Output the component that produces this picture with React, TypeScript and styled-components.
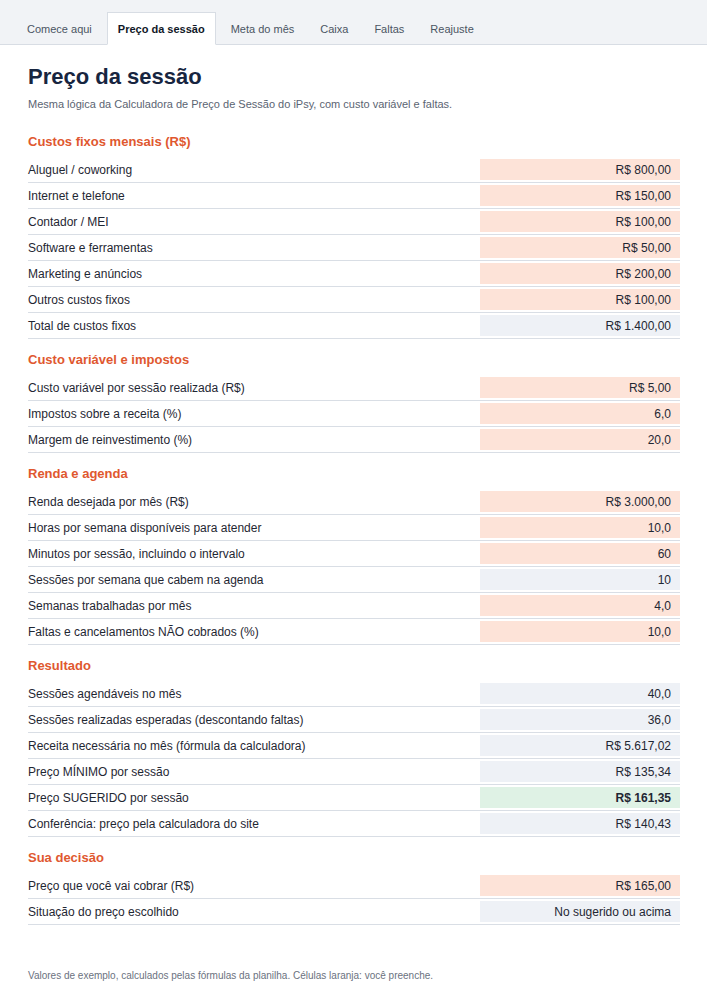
import React from "react";
import styled, { createGlobalStyle } from "styled-components";

const Global = createGlobalStyle`
  html, body { margin: 0; padding: 0; background: #ffffff; }
  body { font-family: "Liberation Sans", Arial, sans-serif; color: #1f2733; }
  * { box-sizing: border-box; }
`;

const Page = styled.div`
  width: 707px;
  min-height: 1000px;
  display: flex;
  flex-direction: column;
`;

const TabBar = styled.nav`
  height: 45px;
  background: #f1f3f6;
  border-bottom: 1px solid #d8dde4;
  display: flex;
  align-items: flex-end;
  gap: 4px;
  padding: 0 16px;
`;

const Tab = styled.div<{ $active?: boolean }>`
  height: 33px;
  margin-bottom: -1px;
  padding: 0 10px;
  display: flex;
  align-items: center;
  font-size: 11px;
  color: ${(p) => (p.$active ? "#111827" : "#4b5563")};
  font-weight: ${(p) => (p.$active ? 700 : 400)};
  background: ${(p) => (p.$active ? "#ffffff" : "transparent")};
  border: 1px solid ${(p) => (p.$active ? "#d8dde4" : "transparent")};
  border-bottom-color: ${(p) => (p.$active ? "#ffffff" : "transparent")};
`;

const Main = styled.main`
  padding: 19px 27px 0 28px;
  display: flex;
  flex-direction: column;
  flex: 1;
`;

const Title = styled.h1`
  margin: 0;
  font-size: 22px;
  font-weight: 700;
  color: #172540;
  line-height: 26px;
`;

const Subtitle = styled.p`
  margin: 7px 0 10px;
  font-size: 11px;
  color: #5b6472;
  line-height: 14px;
`;

const SectionTitle = styled.h2`
  margin: 13px 0 7px;
  font-size: 13px;
  font-weight: 700;
  color: #e0582f;
  line-height: 16px;
`;

const Row = styled.div`
  display: flex;
  align-items: center;
  justify-content: space-between;
  padding: 2px 0;
  border-bottom: 1px solid #d9dee5;
  height: 26px;
`;

const Label = styled.span`
  font-size: 12px;
  color: #1f2733;
`;

type Kind = "input" | "calc" | "good";

const Value = styled.span<{ $kind: Kind }>`
  width: 200px;
  height: 21px;
  display: flex;
  align-items: center;
  justify-content: flex-end;
  padding-right: 9px;
  font-size: 12px;
  color: #1f2733;
  font-weight: ${(p) => (p.$kind === "good" ? 700 : 400)};
  background: ${(p) =>
    p.$kind === "input" ? "#fde3d8" : p.$kind === "good" ? "#dff2e5" : "#eef1f6"};
`;

const Footer = styled.footer`
  margin-top: auto;
  padding: 0 0 19px;
  font-size: 10px;
  color: #6b7280;
`;

type Item = [string, string, Kind];
const sections: { title: string; rows: Item[] }[] = [
  {
    title: "Custos fixos mensais (R$)",
    rows: [
      ["Aluguel / coworking", "R$ 800,00", "input"],
      ["Internet e telefone", "R$ 150,00", "input"],
      ["Contador / MEI", "R$ 100,00", "input"],
      ["Software e ferramentas", "R$ 50,00", "input"],
      ["Marketing e anúncios", "R$ 200,00", "input"],
      ["Outros custos fixos", "R$ 100,00", "input"],
      ["Total de custos fixos", "R$ 1.400,00", "calc"],
    ],
  },
  {
    title: "Custo variável e impostos",
    rows: [
      ["Custo variável por sessão realizada (R$)", "R$ 5,00", "input"],
      ["Impostos sobre a receita (%)", "6,0", "input"],
      ["Margem de reinvestimento (%)", "20,0", "input"],
    ],
  },
  {
    title: "Renda e agenda",
    rows: [
      ["Renda desejada por mês (R$)", "R$ 3.000,00", "input"],
      ["Horas por semana disponíveis para atender", "10,0", "input"],
      ["Minutos por sessão, incluindo o intervalo", "60", "input"],
      ["Sessões por semana que cabem na agenda", "10", "calc"],
      ["Semanas trabalhadas por mês", "4,0", "input"],
      ["Faltas e cancelamentos NÃO cobrados (%)", "10,0", "input"],
    ],
  },
  {
    title: "Resultado",
    rows: [
      ["Sessões agendáveis no mês", "40,0", "calc"],
      ["Sessões realizadas esperadas (descontando faltas)", "36,0", "calc"],
      ["Receita necessária no mês (fórmula da calculadora)", "R$ 5.617,02", "calc"],
      ["Preço MÍNIMO por sessão", "R$ 135,34", "calc"],
      ["Preço SUGERIDO por sessão", "R$ 161,35", "good"],
      ["Conferência: preço pela calculadora do site", "R$ 140,43", "calc"],
    ],
  },
  {
    title: "Sua decisão",
    rows: [
      ["Preço que você vai cobrar (R$)", "R$ 165,00", "input"],
      ["Situação do preço escolhido", "No sugerido ou acima", "calc"],
    ],
  },
];

const tabs = ["Comece aqui", "Preço da sessão", "Meta do mês", "Caixa", "Faltas", "Reajuste"];

export default function App() {
  return (
    <Page>
      <Global />
      <TabBar>
        {tabs.map((t) => (
          <Tab key={t} $active={t === "Preço da sessão"}>
            {t}
          </Tab>
        ))}
      </TabBar>
      <Main>
        <Title>Preço da sessão</Title>
        <Subtitle>
          Mesma lógica da Calculadora de Preço de Sessão do iPsy, com custo variável e faltas.
        </Subtitle>
        {sections.map((s) => (
          <section key={s.title}>
            <SectionTitle>{s.title}</SectionTitle>
            {s.rows.map(([l, v, k]) => (
              <Row key={l}>
                <Label>{l}</Label>
                <Value $kind={k}>{v}</Value>
              </Row>
            ))}
          </section>
        ))}
        <Footer>
          Valores de exemplo, calculados pelas fórmulas da planilha. Células laranja: você preenche.
        </Footer>
      </Main>
    </Page>
  );
}
